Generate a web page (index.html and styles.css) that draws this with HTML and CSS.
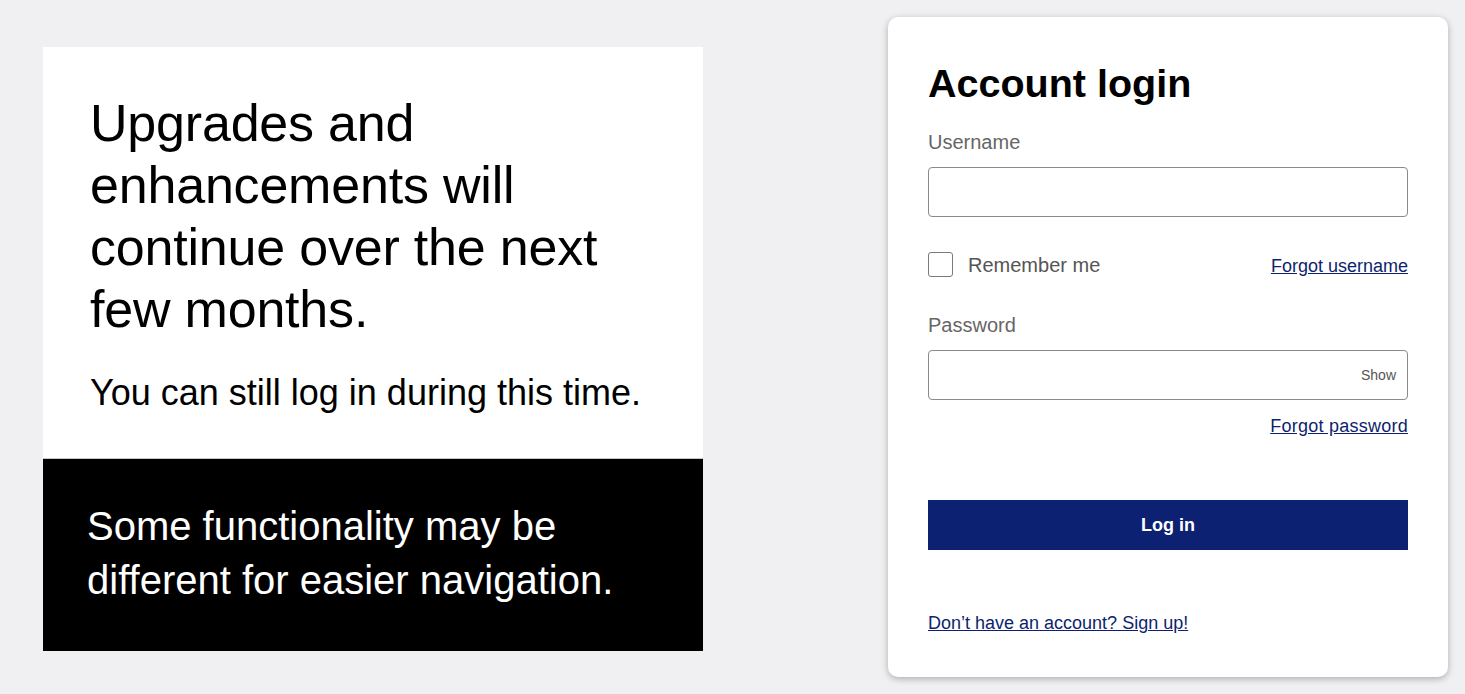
FILE: index.html
```html
<!DOCTYPE html>
<html lang="en">
<head>
    <meta charset="UTF-8">
    <meta name="viewport" content="width=device-width, initial-scale=1.0">
    <title>Account login</title>
    <link rel="stylesheet" href="styles.css">
</head>
<body>
    <div class="page">
        <div class="notice">
            <div class="notice-top">
                <p class="notice-title">Upgrades and enhancements will continue over the next few months.</p>
                <p class="notice-sub">You can still log in during this time.</p>
            </div>
            <div class="notice-bottom">
                <p>Some functionality may be different for easier navigation.</p>
            </div>
        </div>

        <div class="login-card">
            <h1 class="login-title">Account login</h1>
            <form class="login-form" onsubmit="return false;">
                <label class="field-label" for="username">Username</label>
                <input class="text-input" type="text" id="username">

                <div class="remember-row">
                    <label class="remember">
                        <span class="check-box"></span>
                        <span>Remember me</span>
                    </label>
                    <a href="#" class="link">Forgot username</a>
                </div>

                <label class="field-label" for="password">Password</label>
                <div class="password-wrap">
                    <input class="text-input" type="password" id="password">
                    <button type="button" class="show-btn">Show</button>
                </div>
                <div class="forgot-row">
                    <a href="#" class="link">Forgot password</a>
                </div>

                <button type="submit" class="login-btn">Log in</button>
            </form>
            <a href="#" class="link signup-link">Don’t have an account? Sign up!</a>
        </div>
    </div>
</body>
</html>
```

FILE: styles.css
```css
body {
    font-family: 'Liberation Sans', Arial, sans-serif;
    margin: 0;
    padding: 0;
    background-color: #f0f0f2;
}

.page {
    display: flex;
    align-items: center;
    justify-content: space-between;
    height: 694px;
    padding: 0 17px 0 43px;
    box-sizing: border-box;
}

/* left banner */
.notice {
    width: 660px;
    height: 604px;
    margin-top: 4px;
    display: flex;
    flex-direction: column;
}

.notice p {
    margin: 0;
}

.notice-top {
    background-color: #fff;
    height: 412px;
    padding: 45px 40px 0 47px;
    box-sizing: border-box;
    border-bottom: 1px solid #c8c8c8;
}

.notice-title {
    font-size: 52px;
    line-height: 62px;
    letter-spacing: -0.2px;
    color: #000;
}

.notice-sub {
    font-size: 36px;
    line-height: 43px;
    margin-top: 31px !important;
    color: #000;
}

.notice-bottom {
    flex: 1;
    background-color: #000;
    color: #fff;
    padding: 40px 40px 0 44px;
}

.notice-bottom p {
    font-size: 40px;
    line-height: 54px;
}

/* login card */
.login-card {
    width: 560px;
    height: 660px;
    background-color: #fff;
    border-radius: 10px;
    box-shadow: 0 2px 7px rgba(0, 0, 0, 0.28);
    padding: 42px 40px 40px;
    box-sizing: border-box;
}

.login-title {
    font-size: 39.5px;
    line-height: 48px;
    font-weight: bold;
    color: #000;
    margin: 0 0 23px;
}

.login-form {
    display: flex;
    flex-direction: column;
}

.field-label {
    font-size: 20px;
    line-height: 24px;
    color: #666;
    margin-bottom: 13px;
}

.text-input {
    width: 100%;
    height: 50px;
    border: 1px solid #8a8a8a;
    border-radius: 4px;
    box-sizing: border-box;
    padding: 0 12px;
    font-family: inherit;
    font-size: 16px;
    outline: none;
}

.remember-row {
    display: flex;
    align-items: center;
    justify-content: space-between;
    margin: 35px 0 36px;
}

.remember {
    display: flex;
    align-items: center;
    gap: 15px;
    font-size: 20px;
    line-height: 24px;
    color: #555;
    cursor: pointer;
}

.check-box {
    width: 23px;
    height: 23px;
    border: 1px solid #7a7a7a;
    border-radius: 3px;
    background-color: #fff;
}

.link {
    color: #0d1f6e;
    font-size: 18px;
    text-decoration: underline;
}

.remember-row .link {
    margin-top: 3px;
}

.forgot-row .link {
    letter-spacing: 0.25px;
}

.password-wrap {
    position: relative;
}

.show-btn {
    position: absolute;
    right: 12px;
    top: 17px;
    background: none;
    border: none;
    padding: 0;
    font-family: inherit;
    font-size: 14px;
    color: #555;
    cursor: pointer;
}

.forgot-row {
    display: flex;
    justify-content: flex-end;
    margin-top: 15px;
    line-height: 22px;
}

.login-btn {
    margin-top: 63px;
    height: 50px;
    border: none;
    background-color: #0d2173;
    color: #fff;
    font-family: inherit;
    font-size: 18px;
    font-weight: bold;
    cursor: pointer;
}

.signup-link {
    display: inline-block;
    margin-top: 62px;
    line-height: 22px;
}
```
